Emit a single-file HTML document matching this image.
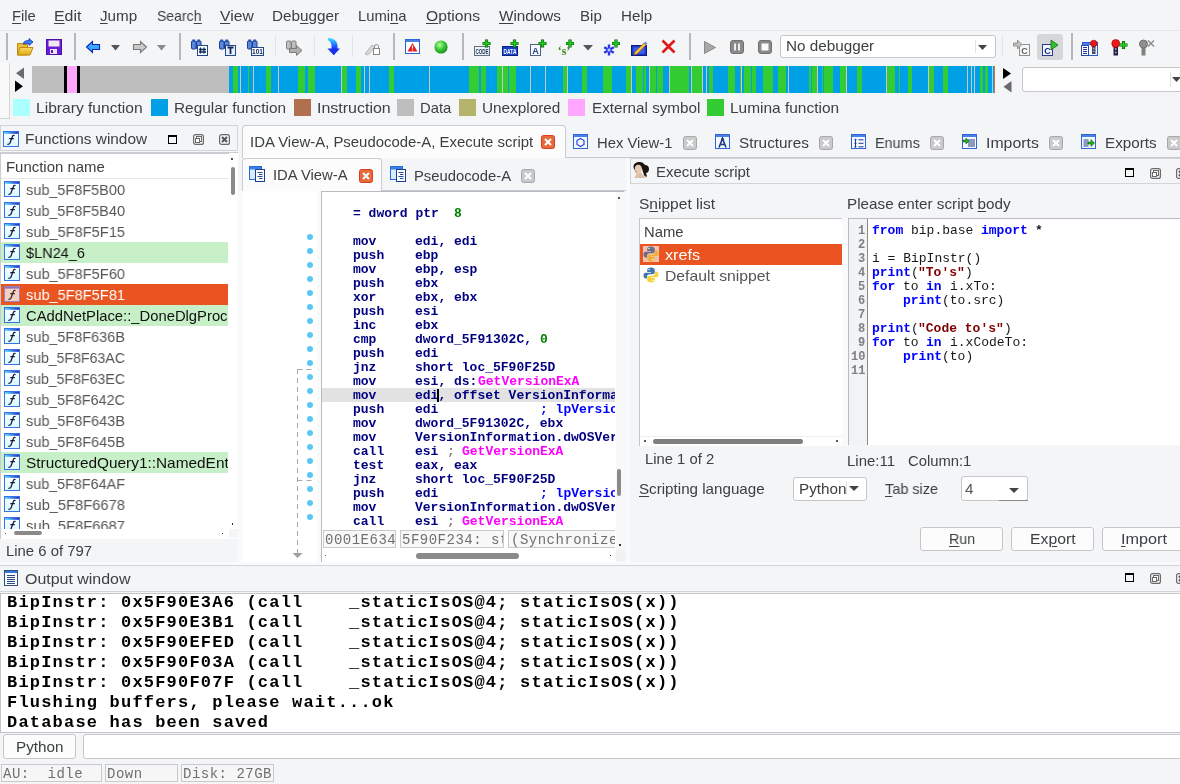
<!DOCTYPE html>
<html><head><meta charset="utf-8"><style>
html,body{margin:0;padding:0;}
body{width:1180px;height:784px;overflow:hidden;position:relative;background:#f4f5f7;font-family:'Liberation Sans', sans-serif;}
.a{position:absolute;}
svg.a{will-change:transform;overflow:visible;}
.t{white-space:pre;transform-origin:0 0;will-change:transform;}
u{text-decoration:underline;text-underline-offset:1.5px;text-decoration-thickness:1px;}

</style></head><body>
<div class="a t" style="left:12.4px;top:8.92px;font:14.8px/1 'Liberation Sans', sans-serif;color:#3c4043;transform:scaleX(0.9898);"><u>F</u>ile</div>
<div class="a t" style="left:54.2px;top:8.92px;font:14.8px/1 'Liberation Sans', sans-serif;color:#3c4043;transform:scaleX(1.0746);"><u>E</u>dit</div>
<div class="a t" style="left:100.3px;top:8.92px;font:14.8px/1 'Liberation Sans', sans-serif;color:#3c4043;transform:scaleX(1.0281);"><u>J</u>ump</div>
<div class="a t" style="left:156.5px;top:8.92px;font:14.8px/1 'Liberation Sans', sans-serif;color:#3c4043;transform:scaleX(0.9470);">Searc<u>h</u></div>
<div class="a t" style="left:219.9px;top:8.92px;font:14.8px/1 'Liberation Sans', sans-serif;color:#3c4043;transform:scaleX(1.0596);"><u>V</u>iew</div>
<div class="a t" style="left:272.2px;top:8.92px;font:14.8px/1 'Liberation Sans', sans-serif;color:#3c4043;transform:scaleX(1.0309);">Deb<u>u</u>gger</div>
<div class="a t" style="left:358.3px;top:8.92px;font:14.8px/1 'Liberation Sans', sans-serif;color:#3c4043;">Lumi<u>n</u>a</div>
<div class="a t" style="left:426px;top:8.92px;font:14.8px/1 'Liberation Sans', sans-serif;color:#3c4043;transform:scaleX(1.0589);"><u>O</u>ptions</div>
<div class="a t" style="left:499px;top:8.92px;font:14.8px/1 'Liberation Sans', sans-serif;color:#3c4043;transform:scaleX(1.0329);"><u>W</u>indows</div>
<div class="a t" style="left:580.4px;top:8.92px;font:14.8px/1 'Liberation Sans', sans-serif;color:#3c4043;transform:scaleX(1.0194);">Bip</div>
<div class="a t" style="left:621.4px;top:8.92px;font:14.8px/1 'Liberation Sans', sans-serif;color:#3c4043;transform:scaleX(1.0252);">Help</div>
<div class="a" style="left:0px;top:30px;width:1180px;height:1px;background:#e6e7e9;"></div>
<div class="a" style="left:5.5px;top:33px;width:2px;height:27px;background:#b8b8b8;"></div>
<div class="a" style="left:74px;top:33px;width:2px;height:27px;background:#b8b8b8;"></div>
<div class="a" style="left:179px;top:33px;width:2px;height:27px;background:#b8b8b8;"></div>
<div class="a" style="left:393px;top:33px;width:2px;height:27px;background:#b8b8b8;"></div>
<div class="a" style="left:462px;top:33px;width:2px;height:27px;background:#b8b8b8;"></div>
<div class="a" style="left:689px;top:33px;width:2px;height:27px;background:#b8b8b8;"></div>
<div class="a" style="left:1071px;top:33px;width:2px;height:27px;background:#b8b8b8;"></div>
<div class="a" style="left:275px;top:36px;width:1px;height:21px;background:#e2e3e5;"></div>
<div class="a" style="left:314px;top:36px;width:1px;height:21px;background:#e2e3e5;"></div>
<div class="a" style="left:352px;top:36px;width:1px;height:21px;background:#e2e3e5;"></div>
<div class="a" style="left:1002px;top:36px;width:1px;height:21px;background:#e2e3e5;"></div>
<!--toolbar icons-->
<svg class="a" style="left:17px;top:38px" width="17" height="18" viewBox="0 0 17 18"><defs><linearGradient id="fo" x1="0" y1="0" x2="0" y2="1"><stop offset="0" stop-color="#f6dc6a"/><stop offset="1" stop-color="#e0a810"/></linearGradient></defs><path d="M0.5 5.5h5l1 1h4v10.5h-10z" fill="#e8bd3a" stroke="#c08a10"/><path d="M3 9.5h13l-3 7.5h-12.5z" fill="url(#fo)" stroke="#c08a10"/><path d="M6 6c1-3 3-3.5 6-3.5v-2l4 3.5-4 3.5v-2c-2 0-4 0-6 0.5z" fill="#3a80f0" stroke="#1530c0" stroke-width="0.8"/></svg>
<svg class="a" style="left:46px;top:38.5px" width="16" height="16" viewBox="0 0 16 16"><rect x="0.5" y="0.5" width="15" height="15" fill="#6a1cd8" stroke="#4a10a8"/><rect x="2.5" y="1.5" width="11" height="6" fill="#f2e8ec"/><rect x="4" y="10" width="7" height="5" fill="#ece8f4"/><rect x="5" y="11" width="2" height="3" fill="#5a20c0"/></svg>
<svg class="a" style="left:86px;top:40.5px" width="14" height="12" viewBox="0 0 14 12"><path d="M0.5 6L6.5 0.5v3h7v5h-7v3z" fill="#3aa8ff" stroke="#0a28b8" stroke-width="1.1"/></svg>
<svg class="a" style="left:111px;top:44.5px" width="9" height="6" viewBox="0 0 9 6"><path d="M0 0h9l-4.5 5.5z" fill="#555"/></svg>
<svg class="a" style="left:133px;top:40.5px" width="14" height="12" viewBox="0 0 14 12"><path d="M13.5 6L7.5 0.5v3h-7v5h7v3z" fill="#c8c8c8" stroke="#7a7a7a" stroke-width="1.1"/></svg>
<svg class="a" style="left:157px;top:44.5px" width="9" height="6" viewBox="0 0 9 6"><path d="M0 0h9l-4.5 5.5z" fill="#8a8a8a"/></svg>
<svg class="a" style="left:191px;top:38.5px" width="17" height="17" viewBox="0 0 17 17"><rect x="0.5" y="2" width="4.5" height="8" rx="1" fill="#5a8ae0" stroke="#1e3f90"/><rect x="5.5" y="2" width="4.5" height="8" rx="1" fill="#5a8ae0" stroke="#1e3f90"/><rect x="1.2" y="0.5" width="3" height="2.5" fill="#2e55b0"/><rect x="6.2" y="0.5" width="3" height="2.5" fill="#2e55b0"/><rect x="6.5" y="6.5" width="10" height="10" fill="#fff" stroke="#1e4a8a"/><path d="M9.5 8.5v6M13 8.5v6M8 10.5h7M8 13h7" stroke="#0e2a60" stroke-width="1.3"/></svg>
<svg class="a" style="left:219px;top:38.5px" width="17" height="17" viewBox="0 0 17 17"><rect x="0.5" y="2" width="4.5" height="8" rx="1" fill="#5a8ae0" stroke="#1e3f90"/><rect x="5.5" y="2" width="4.5" height="8" rx="1" fill="#5a8ae0" stroke="#1e3f90"/><rect x="1.2" y="0.5" width="3" height="2.5" fill="#2e55b0"/><rect x="6.2" y="0.5" width="3" height="2.5" fill="#2e55b0"/><rect x="6.5" y="6.5" width="10" height="10" fill="#e8f0ff" stroke="#1e4a8a"/><path d="M8.5 8.5h6M11.5 8.5v6.5" stroke="#0e2a60" stroke-width="1.8"/></svg>
<svg class="a" style="left:247px;top:38.5px" width="17" height="17" viewBox="0 0 17 17"><rect x="0.5" y="2" width="4.5" height="8" rx="1" fill="#5a8ae0" stroke="#1e3f90"/><rect x="5.5" y="2" width="4.5" height="8" rx="1" fill="#5a8ae0" stroke="#1e3f90"/><rect x="1.2" y="0.5" width="3" height="2.5" fill="#2e55b0"/><rect x="6.2" y="0.5" width="3" height="2.5" fill="#2e55b0"/><rect x="4.5" y="8.5" width="12" height="8" fill="#fff" stroke="#1e4a8a"/><text x="10.5" y="15.2" font-size="6.5" font-weight="bold" text-anchor="middle" font-family="Liberation Sans" fill="#0e2a60">101</text></svg>
<svg class="a" style="left:286px;top:38.5px" width="17" height="17" viewBox="0 0 17 17"><rect x="0.5" y="2" width="4.5" height="8" rx="1" fill="#c0c0c0" stroke="#808080"/><rect x="5.5" y="2" width="4.5" height="8" rx="1" fill="#c0c0c0" stroke="#808080"/><path d="M3.5 9.5h7v-3l5.5 5-5.5 5v-3h-7z" fill="#b0b0b0" stroke="#7a7a7a"/></svg>
<svg class="a" style="left:327px;top:38px" width="13" height="18" viewBox="0 0 13 18"><defs><linearGradient id="da" x1="0" y1="0" x2="0" y2="1"><stop offset="0" stop-color="#40e0ff"/><stop offset="1" stop-color="#1030ff"/></linearGradient></defs><path d="M1 0c6 0 9.5 3 9.5 8v3h-6v-3c0-3-1.5-5-3.5-6z" fill="url(#da)"/><path d="M0.5 10.5h12.5l-6.25 6.8z" fill="#1a30f0"/></svg>
<svg class="a" style="left:364px;top:38.5px" width="16" height="17" viewBox="0 0 16 17"><path d="M1 15l7-9 3 2-7 8z" fill="#d8d8d8" stroke="#aaa" stroke-width="0.8"/><rect x="9.5" y="9.5" width="6" height="6" fill="#fff" stroke="#888"/><path d="M10.5 9.5v-2a2 2 0 0 1 4 0v2" fill="none" stroke="#888"/></svg>
<svg class="a" style="left:405px;top:39px" width="15" height="15" viewBox="0 0 15 15"><rect x="0.5" y="0.5" width="14" height="14" fill="#fff" stroke="#2e64d8"/><rect x="1" y="1" width="13" height="2" fill="#4a80e8"/><path d="M7.5 4l5 8.5h-10z" fill="#e02020"/><path d="M7.5 6.5v3M7.5 10.5v1" stroke="#fff" stroke-width="1.2"/></svg>
<svg class="a" style="left:434px;top:40px" width="14" height="14" viewBox="0 0 14 14"><defs><radialGradient id="gc" cx="0.4" cy="0.35" r="0.7"><stop offset="0" stop-color="#b8ff9a"/><stop offset="0.5" stop-color="#3cc83c"/><stop offset="1" stop-color="#168a16"/></radialGradient></defs><circle cx="7" cy="7" r="6.6" fill="url(#gc)"/></svg>
<svg class="a" style="left:474px;top:38.5px" width="17" height="17" viewBox="0 0 17 17"><rect x="0.5" y="7.5" width="15" height="9" fill="#f0f4f8" stroke="#607080"/><text x="1.5" y="15" font-size="6.5" font-weight="bold" textLength="13" lengthAdjust="spacingAndGlyphs" font-family="Liberation Sans" fill="#103050">CODE</text><path d="M12.5 0.5v8M8.5 4.5h8" stroke="#0a5a0a" stroke-width="3.2"/><path d="M12.5 0.8999999999999999v7.2M8.9 4.5h7.2" stroke="#22c822" stroke-width="1.8"/></svg>
<svg class="a" style="left:502px;top:38.5px" width="17" height="17" viewBox="0 0 17 17"><rect x="0.5" y="7.5" width="15" height="9" fill="#1840c8" stroke="#0a2080"/><text x="1.5" y="15" font-size="6.5" font-weight="bold" textLength="13" lengthAdjust="spacingAndGlyphs" font-family="Liberation Sans" fill="#fff">DATA</text><path d="M12.5 0.5v8M8.5 4.5h8" stroke="#0a5a0a" stroke-width="3.2"/><path d="M12.5 0.8999999999999999v7.2M8.9 4.5h7.2" stroke="#22c822" stroke-width="1.8"/></svg>
<svg class="a" style="left:530px;top:38.5px" width="17" height="17" viewBox="0 0 17 17"><rect x="0.5" y="5.5" width="10" height="11" fill="#f4f8ff" stroke="#506080"/><text x="5.5" y="14.5" font-size="9" font-weight="bold" text-anchor="middle" font-family="Liberation Sans" fill="#1e4080">A</text><path d="M12.5 0.5v8M8.5 4.5h8" stroke="#0a5a0a" stroke-width="3.2"/><path d="M12.5 0.8999999999999999v7.2M8.9 4.5h7.2" stroke="#22c822" stroke-width="1.8"/></svg>
<svg class="a" style="left:557px;top:38.5px" width="18" height="17" viewBox="0 0 18 17"><text x="7" y="16" font-size="12" font-weight="bold" text-anchor="middle" font-family="Liberation Serif" fill="#3a8a1a">‘s’</text><path d="M13 0.5v8M9 4.5h8" stroke="#0a5a0a" stroke-width="3.2"/><path d="M13 0.8999999999999999v7.2M9.4 4.5h7.2" stroke="#22c822" stroke-width="1.8"/></svg>
<svg class="a" style="left:583px;top:45px" width="10" height="5.5" viewBox="0 0 10 5.5"><path d="M0 0h10l-5 5.5z" fill="#555"/></svg>
<svg class="a" style="left:603px;top:38.5px" width="18" height="17" viewBox="0 0 18 17"><path d="M6 5.5v11M1.2 8.2l9.6 5.6M1.2 13.8l9.6-5.6" stroke="#2a36e8" stroke-width="2.4"/><circle cx="6" cy="11" r="2" fill="#b8c8ff" stroke="#2a36e8" stroke-width="0.8"/><path d="M13 0.5v8M9 4.5h8" stroke="#0a5a0a" stroke-width="3.2"/><path d="M13 0.8999999999999999v7.2M9.4 4.5h7.2" stroke="#22c822" stroke-width="1.8"/></svg>
<svg class="a" style="left:631px;top:38.5px" width="18" height="17" viewBox="0 0 18 17"><rect x="0.5" y="6.5" width="15" height="10" fill="#1a3ad0" stroke="#0a1a80"/><rect x="2.5" y="8.5" width="11" height="6" fill="#4060e8"/><path d="M4 13l9-9 2 2-9 9-3 1z" fill="#f8c040" stroke="#a06010" stroke-width="0.8"/><path d="M13 4l1.5-1.5 2 2-1.5 1.5z" fill="#6090f0"/></svg>
<svg class="a" style="left:661px;top:39px" width="15" height="15" viewBox="0 0 15 15"><path d="M1.5 1.5l12 12M13.5 1.5l-12 12" stroke="#e01818" stroke-width="2.6"/></svg>
<svg class="a" style="left:704px;top:41px" width="12" height="13" viewBox="0 0 12 13"><path d="M0.5 0.5l11 6-11 6z" fill="#a8a8a8" stroke="#888"/></svg>
<svg class="a" style="left:730px;top:40px" width="14" height="14" viewBox="0 0 14 14"><rect x="0.5" y="0.5" width="13" height="13" rx="2.5" fill="#8a8a8a" stroke="#707070"/><rect x="4" y="3.5" width="2" height="7" fill="#eee"/><rect x="8" y="3.5" width="2" height="7" fill="#eee"/></svg>
<svg class="a" style="left:758px;top:40px" width="14" height="14" viewBox="0 0 14 14"><rect x="0.5" y="0.5" width="13" height="13" rx="2.5" fill="#8a8a8a" stroke="#707070"/><rect x="3.5" y="3.5" width="7" height="7" fill="#fafafa"/></svg>
<div class="a" style="left:780px;top:35px;width:216px;height:23px;background:#fff;box-sizing:border-box;border:1px solid #c4c6c9;border-radius:3px;"></div>
<div class="a" style="left:974.5px;top:40px;width:1px;height:13px;background:#e2e2e2;"></div>
<div class="a t" style="left:785.7px;top:38.72px;font:14.8px/1 'Liberation Sans', sans-serif;color:#3c4043;transform:scaleX(1.0309);">No debugger</div>
<svg class="a" style="left:978px;top:45px" width="9" height="5" viewBox="0 0 9 5"><path d="M0 0h9l-4.5 5z" fill="#444"/></svg>
<svg class="a" style="left:1013px;top:38.5px" width="18" height="17" viewBox="0 0 18 17"><rect x="6.5" y="5.5" width="10" height="11" fill="#f8f8f8" stroke="#909090"/><text x="11.5" y="14.5" font-size="9" font-weight="bold" text-anchor="middle" font-family="Liberation Sans" fill="#606060">C</text><path d="M0.5 4h4v-3l4.5 4.5-4.5 4.5v-3h-4z" fill="#c0c0c0" stroke="#808080" stroke-width="0.8"/></svg>
<div class="a" style="left:1037px;top:34px;width:26px;height:25.5px;background:#d6d7d9;border-radius:3px;"></div>
<svg class="a" style="left:1042px;top:38.5px" width="17" height="17" viewBox="0 0 17 17"><rect x="0.5" y="5.5" width="10" height="11" fill="#f0f4ff" stroke="#2a3a90"/><text x="5.5" y="14.5" font-size="9" font-weight="bold" text-anchor="middle" font-family="Liberation Sans" fill="#1a2a80">C</text><path d="M9 1v10l7-5z" fill="#30c030" stroke="#107010" stroke-width="0.8"/></svg>
<svg class="a" style="left:1082px;top:38.5px" width="18" height="17" viewBox="0 0 18 17"><rect x="0.5" y="3.5" width="15" height="13" fill="#f4f8ff" stroke="#2a5ad0"/><rect x="1" y="4" width="14" height="2" fill="#4a80e8"/><rect x="-0.5" y="6.5" width="7" height="10" fill="#fff" stroke="#2a4aa0"/><path d="M1 8.5h4M1 10.5h4M1 12.5h4M1 14.5h4" stroke="#1a3a90"/><rect x="10" y="7" width="3.5" height="8" fill="#404060"/><circle cx="11.75" cy="9.5" r="0.9" fill="#aaa"/><circle cx="11.75" cy="12.5" r="0.9" fill="#aaa"/><circle cx="11.75" cy="4.5" r="3.3" fill="#e81818" stroke="#900" stroke-width="0.6"/></svg>
<svg class="a" style="left:1111px;top:38.5px" width="17" height="17" viewBox="0 0 17 17"><rect x="2.5" y="6" width="4.5" height="10.5" fill="#20204a"/><circle cx="4.75" cy="10" r="0.9" fill="#aaa"/><circle cx="4.75" cy="13.5" r="0.9" fill="#aaa"/><circle cx="4.75" cy="4.5" r="4" fill="#f01818" stroke="#900" stroke-width="0.6"/><path d="M12.5 2v8M8.5 6h8" stroke="#0a5a0a" stroke-width="3.2"/><path d="M12.5 2.4v7.2M8.9 6h7.2" stroke="#22c822" stroke-width="1.8"/></svg>
<svg class="a" style="left:1139px;top:38.5px" width="17" height="17" viewBox="0 0 17 17"><rect x="2.5" y="7" width="4" height="9.5" fill="#808080"/><circle cx="4.5" cy="5" r="4" fill="#909090" stroke="#707070"/><path d="M9 1.5l6 6M15 1.5l-6 6" stroke="#888" stroke-width="1.3"/></svg>
<div class="a" style="left:0px;top:63px;width:9.5px;height:56px;background:#f9f9fa;border-right:1px solid #d4d6d9;border-bottom:1px solid #d4d6d9;box-sizing:border-box;"></div>
<svg class="a" style="left:15px;top:67px" width="10" height="26" viewBox="0 0 10 26"><path d="M9 0.5v11.5l-8-5.75z" fill="#6a6a6a"/><path d="M0 13.5v11.5l8-5.75z" fill="#000"/></svg>
<svg class="a" style="left:1003px;top:67px" width="10" height="26" viewBox="0 0 10 26"><path d="M0 1v11l8-5.5z" fill="#000"/><path d="M8.5 14v11.5l-8-5.75z" fill="#6a6a6a"/></svg>
<svg class="a" style="left:32px;top:66px" width="963" height="27" viewBox="0 0 963 27"><rect x="0" y="0" width="197" height="27" fill="#bebebe"/><rect x="32" y="0" width="3" height="27" fill="#000"/><rect x="35" y="0" width="10" height="27" fill="#ffa6ff"/><rect x="45" y="0" width="3" height="27" fill="#000"/><rect x="197" y="0" width="766" height="27" fill="#00a0e6"/><rect x="201.0" y="0" width="5.0" height="27" fill="#33cc33"/><rect x="208.0" y="0" width="1.0" height="27" fill="#c8c8c8"/><rect x="216.0" y="0" width="1.0" height="27" fill="#33cc33"/><rect x="221.0" y="0" width="1.0" height="27" fill="#c8c8c8"/><rect x="234.0" y="0" width="5.0" height="27" fill="#33cc33"/><rect x="246.0" y="0" width="1.0" height="27" fill="#c8c8c8"/><rect x="266.0" y="0" width="7.0" height="27" fill="#33cc33"/><rect x="276.0" y="0" width="7.0" height="27" fill="#33cc33"/><rect x="309.0" y="0" width="1.0" height="27" fill="#c8c8c8"/><rect x="310.0" y="0" width="5.0" height="27" fill="#33cc33"/><rect x="324.0" y="0" width="5.0" height="27" fill="#33cc33"/><rect x="332.0" y="0" width="1.0" height="27" fill="#c8c8c8"/><rect x="337.0" y="0" width="1.0" height="27" fill="#c8c8c8"/><rect x="357.0" y="0" width="5.0" height="27" fill="#33cc33"/><rect x="397.0" y="0" width="1.0" height="27" fill="#c8c8c8"/><rect x="437.0" y="0" width="10.0" height="27" fill="#33cc33"/><rect x="449.0" y="0" width="5.0" height="27" fill="#33cc33"/><rect x="465.0" y="0" width="5.0" height="27" fill="#33cc33"/><rect x="470.0" y="0" width="1.0" height="27" fill="#c8c8c8"/><rect x="471.0" y="0" width="5.0" height="27" fill="#33cc33"/><rect x="477.0" y="0" width="7.0" height="27" fill="#33cc33"/><rect x="498.0" y="0" width="1.0" height="27" fill="#c8c8c8"/><rect x="513.0" y="0" width="1.0" height="27" fill="#c8c8c8"/><rect x="531.0" y="0" width="4.0" height="27" fill="#33cc33"/><rect x="535.0" y="0" width="1.0" height="27" fill="#c8c8c8"/><rect x="550.0" y="0" width="5.0" height="27" fill="#33cc33"/><rect x="571.0" y="0" width="9.0" height="27" fill="#33cc33"/><rect x="594.0" y="0" width="5.0" height="27" fill="#33cc33"/><rect x="599.0" y="0" width="1.0" height="27" fill="#c8c8c8"/><rect x="604.0" y="0" width="7.0" height="27" fill="#33cc33"/><rect x="612.0" y="0" width="2.0" height="27" fill="#33cc33"/><rect x="617.0" y="0" width="1.0" height="27" fill="#c8c8c8"/><rect x="618.0" y="0" width="6.0" height="27" fill="#33cc33"/><rect x="625.0" y="0" width="6.0" height="27" fill="#33cc33"/><rect x="637.0" y="0" width="1.0" height="27" fill="#c8c8c8"/><rect x="638.0" y="0" width="19.0" height="27" fill="#33cc33"/><rect x="659.0" y="0" width="1.0" height="27" fill="#c8c8c8"/><rect x="660.0" y="0" width="10.0" height="27" fill="#33cc33"/><rect x="670.0" y="0" width="1.0" height="27" fill="#c8c8c8"/><rect x="674.0" y="0" width="1.0" height="27" fill="#c8c8c8"/><rect x="677.0" y="0" width="4.0" height="27" fill="#33cc33"/><rect x="696.0" y="0" width="7.0" height="27" fill="#33cc33"/><rect x="708.0" y="0" width="1.0" height="27" fill="#33cc33"/><rect x="709.0" y="0" width="1.0" height="27" fill="#c8c8c8"/><rect x="712.0" y="0" width="7.0" height="27" fill="#33cc33"/><rect x="720.0" y="0" width="4.0" height="27" fill="#33cc33"/><rect x="731.0" y="0" width="10.0" height="27" fill="#33cc33"/><rect x="746.0" y="0" width="8.0" height="27" fill="#33cc33"/><rect x="756.0" y="0" width="1.0" height="27" fill="#c8c8c8"/><rect x="777.0" y="0" width="2.0" height="27" fill="#33cc33"/><rect x="780.0" y="0" width="5.0" height="27" fill="#33cc33"/><rect x="785.0" y="0" width="1.0" height="27" fill="#c8c8c8"/><rect x="790.0" y="0" width="1.0" height="27" fill="#33cc33"/><rect x="792.0" y="0" width="9.0" height="27" fill="#33cc33"/><rect x="808.0" y="0" width="6.0" height="27" fill="#33cc33"/><rect x="814.0" y="0" width="1.0" height="27" fill="#c8c8c8"/><rect x="825.0" y="0" width="5.0" height="27" fill="#33cc33"/><rect x="854.0" y="0" width="1.0" height="27" fill="#c8c8c8"/><rect x="855.0" y="0" width="8.0" height="27" fill="#33cc33"/><rect x="867.0" y="0" width="1.0" height="27" fill="#33cc33"/><rect x="876.0" y="0" width="4.0" height="27" fill="#33cc33"/><rect x="896.0" y="0" width="1.0" height="27" fill="#c8c8c8"/><rect x="897.0" y="0" width="5.0" height="27" fill="#33cc33"/><rect x="911.0" y="0" width="5.0" height="27" fill="#33cc33"/><rect x="935.0" y="0" width="1.0" height="27" fill="#c8c8c8"/><rect x="939.0" y="0" width="1.0" height="27" fill="#c8c8c8"/><rect x="942.0" y="0" width="1.0" height="27" fill="#c8c8c8"/><rect x="948.0" y="0" width="3.0" height="27" fill="#33cc33"/><rect x="953.0" y="0" width="3.0" height="27" fill="#33cc33"/><rect x="960.0" y="0" width="1.0" height="27" fill="#c8c8c8"/><rect x="962.0" y="0" width="1.0" height="27" fill="#c87850"/></svg>
<div class="a" style="left:1021.5px;top:67px;width:170px;height:25px;background:#fff;box-sizing:border-box;border:1px solid #c4c6c9;border-radius:3px;"></div>
<div class="a" style="left:1169.5px;top:72px;width:1px;height:15px;background:#e2e2e2;"></div>
<svg class="a" style="left:1172px;top:77px" width="9" height="5" viewBox="0 0 9 5"><path d="M0 0h9l-4.5 5z" fill="#444"/></svg>
<div class="a" style="left:13px;top:99px;width:17px;height:17px;background:#aaffff;"></div>
<div class="a t" style="left:36.3px;top:100.92px;font:14.8px/1 'Liberation Sans', sans-serif;color:#3c4043;transform:scaleX(1.0547);">Library function</div>
<div class="a" style="left:151px;top:99px;width:17px;height:17px;background:#00a0e6;"></div>
<div class="a t" style="left:174.4px;top:100.92px;font:14.8px/1 'Liberation Sans', sans-serif;color:#3c4043;transform:scaleX(1.0403);">Regular function</div>
<div class="a" style="left:294px;top:99px;width:17px;height:17px;background:#b07050;"></div>
<div class="a t" style="left:316.7px;top:100.92px;font:14.8px/1 'Liberation Sans', sans-serif;color:#3c4043;transform:scaleX(1.0797);">Instruction</div>
<div class="a" style="left:397px;top:99px;width:17px;height:17px;background:#bebebe;"></div>
<div class="a t" style="left:420.4px;top:100.92px;font:14.8px/1 'Liberation Sans', sans-serif;color:#3c4043;transform:scaleX(0.9854);">Data</div>
<div class="a" style="left:459px;top:99px;width:17px;height:17px;background:#b4b46c;"></div>
<div class="a t" style="left:482.4px;top:100.92px;font:14.8px/1 'Liberation Sans', sans-serif;color:#3c4043;transform:scaleX(1.0360);">Unexplored</div>
<div class="a" style="left:568px;top:99px;width:17px;height:17px;background:#ffa6ff;"></div>
<div class="a t" style="left:591.6px;top:100.92px;font:14.8px/1 'Liberation Sans', sans-serif;color:#3c4043;transform:scaleX(1.0298);">External symbol</div>
<div class="a" style="left:707px;top:99px;width:17px;height:17px;background:#33cc33;"></div>
<div class="a t" style="left:730.4px;top:100.92px;font:14.8px/1 'Liberation Sans', sans-serif;color:#3c4043;transform:scaleX(1.0443);">Lumina function</div>
<div class="a" style="left:0px;top:125px;width:238px;height:26px;background:#f4f5f7;box-sizing:border-box;border:1px solid #d2d4d7;"></div>
<svg class="a" style="left:3px;top:130.5px" width="16" height="16" viewBox="0 0 16 16"><defs><linearGradient id="fb" x1="0" y1="0" x2="1" y2="0"><stop offset="0" stop-color="#5ad8ff"/><stop offset="1" stop-color="#1a30c8"/></linearGradient><linearGradient id="fi" x1="0" y1="0" x2="0" y2="1"><stop offset="0" stop-color="#ffffff"/><stop offset="1" stop-color="#d6f8ff"/></linearGradient></defs><rect x="0.5" y="0.5" width="15" height="15" fill="url(#fi)" stroke="#3a72e6"/><rect x="1" y="1" width="14" height="1.8" fill="url(#fb)"/><path d="M11.5 4.6c-.8-.4-1.6-.2-2 .6L6.9 12.2c-.4.8-1.2 1.2-2.5 1.1M6.3 7.6h4.5" fill="none" stroke="#10183a" stroke-width="1.25"/></svg>
<div class="a t" style="left:25.2px;top:132.42px;font:14.8px/1 'Liberation Sans', sans-serif;color:#3c4043;transform:scaleX(1.0373);">Functions window</div>
<svg class="a" style="left:168px;top:135px" width="10" height="10" viewBox="0 0 10 10"><rect x="0.5" y="0.5" width="8" height="8" fill="none" stroke="#000" stroke-width="1"/><rect x="0" y="0" width="9" height="2" fill="#000"/></svg>
<svg class="a" style="left:193px;top:134px" width="11" height="11" viewBox="0 0 11 11"><rect x="0.6" y="0.6" width="9.8" height="9.8" rx="2" fill="none" stroke="#6a6a6a" stroke-width="1.2"/><rect x="3.5" y="2.5" width="5" height="5" fill="none" stroke="#6a6a6a"/><rect x="2.5" y="4.5" width="4" height="4" fill="#fff" stroke="#6a6a6a"/></svg>
<svg class="a" style="left:219px;top:134px" width="11" height="11" viewBox="0 0 11 11"><rect x="0.6" y="0.6" width="9.8" height="9.8" rx="2" fill="none" stroke="#6a6a6a" stroke-width="1.2"/><path d="M3 3l5 5M8 3l-5 5" stroke="#555" stroke-width="2"/></svg>
<div class="a" style="left:0px;top:152px;width:238px;height:387px;background:#fff;border-top:2px solid #c9ccd0;border-left:1px solid #c9ccd0;box-sizing:border-box;"></div>
<div class="a t" style="left:5.7px;top:159.92px;font:14.8px/1 'Liberation Sans', sans-serif;color:#3c4043;transform:scaleX(1.0084);">Function name</div>
<div class="a" style="left:1px;top:178px;width:228px;height:1px;background:#e6e7e9;"></div>
<div class="a" style="left:1px;top:179px;width:227px;height:350px;overflow:hidden">
<svg class="a" style="left:3px;top:2px" width="16" height="16" viewBox="0 0 16 16"><defs><linearGradient id="fb" x1="0" y1="0" x2="1" y2="0"><stop offset="0" stop-color="#5ad8ff"/><stop offset="1" stop-color="#1a30c8"/></linearGradient><linearGradient id="fi" x1="0" y1="0" x2="0" y2="1"><stop offset="0" stop-color="#ffffff"/><stop offset="1" stop-color="#d6f8ff"/></linearGradient></defs><rect x="0.5" y="0.5" width="15" height="15" fill="url(#fi)" stroke="#3a72e6"/><rect x="1" y="1" width="14" height="1.8" fill="url(#fb)"/><path d="M11.5 4.6c-.8-.4-1.6-.2-2 .6L6.9 12.2c-.4.8-1.2 1.2-2.5 1.1M6.3 7.6h4.5" fill="none" stroke="#10183a" stroke-width="1.25"/></svg>
<div class="a t" style="left:25.3px;top:3.92px;font:14.8px/1 'Liberation Sans', sans-serif;color:#555;transform:scaleX(0.9785);">sub_5F8F5B00</div>
<svg class="a" style="left:3px;top:23px" width="16" height="16" viewBox="0 0 16 16"><defs><linearGradient id="fb" x1="0" y1="0" x2="1" y2="0"><stop offset="0" stop-color="#5ad8ff"/><stop offset="1" stop-color="#1a30c8"/></linearGradient><linearGradient id="fi" x1="0" y1="0" x2="0" y2="1"><stop offset="0" stop-color="#ffffff"/><stop offset="1" stop-color="#d6f8ff"/></linearGradient></defs><rect x="0.5" y="0.5" width="15" height="15" fill="url(#fi)" stroke="#3a72e6"/><rect x="1" y="1" width="14" height="1.8" fill="url(#fb)"/><path d="M11.5 4.6c-.8-.4-1.6-.2-2 .6L6.9 12.2c-.4.8-1.2 1.2-2.5 1.1M6.3 7.6h4.5" fill="none" stroke="#10183a" stroke-width="1.25"/></svg>
<div class="a t" style="left:25.3px;top:24.92px;font:14.8px/1 'Liberation Sans', sans-serif;color:#555;transform:scaleX(0.9785);">sub_5F8F5B40</div>
<svg class="a" style="left:3px;top:44px" width="16" height="16" viewBox="0 0 16 16"><defs><linearGradient id="fb" x1="0" y1="0" x2="1" y2="0"><stop offset="0" stop-color="#5ad8ff"/><stop offset="1" stop-color="#1a30c8"/></linearGradient><linearGradient id="fi" x1="0" y1="0" x2="0" y2="1"><stop offset="0" stop-color="#ffffff"/><stop offset="1" stop-color="#d6f8ff"/></linearGradient></defs><rect x="0.5" y="0.5" width="15" height="15" fill="url(#fi)" stroke="#3a72e6"/><rect x="1" y="1" width="14" height="1.8" fill="url(#fb)"/><path d="M11.5 4.6c-.8-.4-1.6-.2-2 .6L6.9 12.2c-.4.8-1.2 1.2-2.5 1.1M6.3 7.6h4.5" fill="none" stroke="#10183a" stroke-width="1.25"/></svg>
<div class="a t" style="left:25.3px;top:45.92px;font:14.8px/1 'Liberation Sans', sans-serif;color:#555;transform:scaleX(0.9866);">sub_5F8F5F15</div>
<div class="a" style="left:0px;top:63px;width:226.5px;height:21px;background:#c8f0c8;"></div>
<svg class="a" style="left:3px;top:65px" width="16" height="16" viewBox="0 0 16 16"><defs><linearGradient id="fb" x1="0" y1="0" x2="1" y2="0"><stop offset="0" stop-color="#5ad8ff"/><stop offset="1" stop-color="#1a30c8"/></linearGradient><linearGradient id="fi" x1="0" y1="0" x2="0" y2="1"><stop offset="0" stop-color="#ffffff"/><stop offset="1" stop-color="#d6f8ff"/></linearGradient></defs><rect x="0.5" y="0.5" width="15" height="15" fill="url(#fi)" stroke="#3a72e6"/><rect x="1" y="1" width="14" height="1.8" fill="url(#fb)"/><path d="M11.5 4.6c-.8-.4-1.6-.2-2 .6L6.9 12.2c-.4.8-1.2 1.2-2.5 1.1M6.3 7.6h4.5" fill="none" stroke="#10183a" stroke-width="1.25"/></svg>
<div class="a t" style="left:25.3px;top:66.92px;font:14.8px/1 'Liberation Sans', sans-serif;color:#111;transform:scaleX(0.9823);">$LN24_6</div>
<svg class="a" style="left:3px;top:86px" width="16" height="16" viewBox="0 0 16 16"><defs><linearGradient id="fb" x1="0" y1="0" x2="1" y2="0"><stop offset="0" stop-color="#5ad8ff"/><stop offset="1" stop-color="#1a30c8"/></linearGradient><linearGradient id="fi" x1="0" y1="0" x2="0" y2="1"><stop offset="0" stop-color="#ffffff"/><stop offset="1" stop-color="#d6f8ff"/></linearGradient></defs><rect x="0.5" y="0.5" width="15" height="15" fill="url(#fi)" stroke="#3a72e6"/><rect x="1" y="1" width="14" height="1.8" fill="url(#fb)"/><path d="M11.5 4.6c-.8-.4-1.6-.2-2 .6L6.9 12.2c-.4.8-1.2 1.2-2.5 1.1M6.3 7.6h4.5" fill="none" stroke="#10183a" stroke-width="1.25"/></svg>
<div class="a t" style="left:25.3px;top:87.92px;font:14.8px/1 'Liberation Sans', sans-serif;color:#555;transform:scaleX(0.9866);">sub_5F8F5F60</div>
<div class="a" style="left:0px;top:105px;width:226.5px;height:21px;background:#e95420;"></div>
<svg class="a" style="left:3px;top:107px" width="16" height="16" viewBox="0 0 16 16"><rect x="0.5" y="0.5" width="15" height="15" fill="#f2d0c4" stroke="#9a80b8"/><rect x="1" y="1" width="14" height="1.6" fill="#8a70c0"/><path d="M11.5 4.6c-.8-.4-1.6-.2-2 .6L6.9 12.2c-.4.8-1.2 1.2-2.5 1.1M6.3 7.6h4.5" fill="none" stroke="#3a2020" stroke-width="1.25"/></svg>
<div class="a t" style="left:25.3px;top:108.92px;font:14.8px/1 'Liberation Sans', sans-serif;color:#fff;transform:scaleX(0.9866);">sub_5F8F5F81</div>
<div class="a" style="left:0px;top:126px;width:226.5px;height:21px;background:#c8f0c8;"></div>
<svg class="a" style="left:3px;top:128px" width="16" height="16" viewBox="0 0 16 16"><defs><linearGradient id="fb" x1="0" y1="0" x2="1" y2="0"><stop offset="0" stop-color="#5ad8ff"/><stop offset="1" stop-color="#1a30c8"/></linearGradient><linearGradient id="fi" x1="0" y1="0" x2="0" y2="1"><stop offset="0" stop-color="#ffffff"/><stop offset="1" stop-color="#d6f8ff"/></linearGradient></defs><rect x="0.5" y="0.5" width="15" height="15" fill="url(#fi)" stroke="#3a72e6"/><rect x="1" y="1" width="14" height="1.8" fill="url(#fb)"/><path d="M11.5 4.6c-.8-.4-1.6-.2-2 .6L6.9 12.2c-.4.8-1.2 1.2-2.5 1.1M6.3 7.6h4.5" fill="none" stroke="#10183a" stroke-width="1.25"/></svg>
<div class="a t" style="left:25.3px;top:129.92px;font:14.8px/1 'Liberation Sans', sans-serif;color:#111;transform:scaleX(1.0);">CAddNetPlace::_DoneDlgProc</div>
<svg class="a" style="left:3px;top:149px" width="16" height="16" viewBox="0 0 16 16"><defs><linearGradient id="fb" x1="0" y1="0" x2="1" y2="0"><stop offset="0" stop-color="#5ad8ff"/><stop offset="1" stop-color="#1a30c8"/></linearGradient><linearGradient id="fi" x1="0" y1="0" x2="0" y2="1"><stop offset="0" stop-color="#ffffff"/><stop offset="1" stop-color="#d6f8ff"/></linearGradient></defs><rect x="0.5" y="0.5" width="15" height="15" fill="url(#fi)" stroke="#3a72e6"/><rect x="1" y="1" width="14" height="1.8" fill="url(#fb)"/><path d="M11.5 4.6c-.8-.4-1.6-.2-2 .6L6.9 12.2c-.4.8-1.2 1.2-2.5 1.1M6.3 7.6h4.5" fill="none" stroke="#10183a" stroke-width="1.25"/></svg>
<div class="a t" style="left:25.3px;top:150.92px;font:14.8px/1 'Liberation Sans', sans-serif;color:#555;transform:scaleX(0.9785);">sub_5F8F636B</div>
<svg class="a" style="left:3px;top:170px" width="16" height="16" viewBox="0 0 16 16"><defs><linearGradient id="fb" x1="0" y1="0" x2="1" y2="0"><stop offset="0" stop-color="#5ad8ff"/><stop offset="1" stop-color="#1a30c8"/></linearGradient><linearGradient id="fi" x1="0" y1="0" x2="0" y2="1"><stop offset="0" stop-color="#ffffff"/><stop offset="1" stop-color="#d6f8ff"/></linearGradient></defs><rect x="0.5" y="0.5" width="15" height="15" fill="url(#fi)" stroke="#3a72e6"/><rect x="1" y="1" width="14" height="1.8" fill="url(#fb)"/><path d="M11.5 4.6c-.8-.4-1.6-.2-2 .6L6.9 12.2c-.4.8-1.2 1.2-2.5 1.1M6.3 7.6h4.5" fill="none" stroke="#10183a" stroke-width="1.25"/></svg>
<div class="a t" style="left:25.3px;top:171.92px;font:14.8px/1 'Liberation Sans', sans-serif;color:#555;transform:scaleX(0.9553);">sub_5F8F63AC</div>
<svg class="a" style="left:3px;top:191px" width="16" height="16" viewBox="0 0 16 16"><defs><linearGradient id="fb" x1="0" y1="0" x2="1" y2="0"><stop offset="0" stop-color="#5ad8ff"/><stop offset="1" stop-color="#1a30c8"/></linearGradient><linearGradient id="fi" x1="0" y1="0" x2="0" y2="1"><stop offset="0" stop-color="#ffffff"/><stop offset="1" stop-color="#d6f8ff"/></linearGradient></defs><rect x="0.5" y="0.5" width="15" height="15" fill="url(#fi)" stroke="#3a72e6"/><rect x="1" y="1" width="14" height="1.8" fill="url(#fb)"/><path d="M11.5 4.6c-.8-.4-1.6-.2-2 .6L6.9 12.2c-.4.8-1.2 1.2-2.5 1.1M6.3 7.6h4.5" fill="none" stroke="#10183a" stroke-width="1.25"/></svg>
<div class="a t" style="left:25.3px;top:192.92px;font:14.8px/1 'Liberation Sans', sans-serif;color:#555;transform:scaleX(0.9553);">sub_5F8F63EC</div>
<svg class="a" style="left:3px;top:212px" width="16" height="16" viewBox="0 0 16 16"><defs><linearGradient id="fb" x1="0" y1="0" x2="1" y2="0"><stop offset="0" stop-color="#5ad8ff"/><stop offset="1" stop-color="#1a30c8"/></linearGradient><linearGradient id="fi" x1="0" y1="0" x2="0" y2="1"><stop offset="0" stop-color="#ffffff"/><stop offset="1" stop-color="#d6f8ff"/></linearGradient></defs><rect x="0.5" y="0.5" width="15" height="15" fill="url(#fi)" stroke="#3a72e6"/><rect x="1" y="1" width="14" height="1.8" fill="url(#fb)"/><path d="M11.5 4.6c-.8-.4-1.6-.2-2 .6L6.9 12.2c-.4.8-1.2 1.2-2.5 1.1M6.3 7.6h4.5" fill="none" stroke="#10183a" stroke-width="1.25"/></svg>
<div class="a t" style="left:25.3px;top:213.92px;font:14.8px/1 'Liberation Sans', sans-serif;color:#555;transform:scaleX(0.9706);">sub_5F8F642C</div>
<svg class="a" style="left:3px;top:233px" width="16" height="16" viewBox="0 0 16 16"><defs><linearGradient id="fb" x1="0" y1="0" x2="1" y2="0"><stop offset="0" stop-color="#5ad8ff"/><stop offset="1" stop-color="#1a30c8"/></linearGradient><linearGradient id="fi" x1="0" y1="0" x2="0" y2="1"><stop offset="0" stop-color="#ffffff"/><stop offset="1" stop-color="#d6f8ff"/></linearGradient></defs><rect x="0.5" y="0.5" width="15" height="15" fill="url(#fi)" stroke="#3a72e6"/><rect x="1" y="1" width="14" height="1.8" fill="url(#fb)"/><path d="M11.5 4.6c-.8-.4-1.6-.2-2 .6L6.9 12.2c-.4.8-1.2 1.2-2.5 1.1M6.3 7.6h4.5" fill="none" stroke="#10183a" stroke-width="1.25"/></svg>
<div class="a t" style="left:25.3px;top:234.92px;font:14.8px/1 'Liberation Sans', sans-serif;color:#555;transform:scaleX(0.9785);">sub_5F8F643B</div>
<svg class="a" style="left:3px;top:254px" width="16" height="16" viewBox="0 0 16 16"><defs><linearGradient id="fb" x1="0" y1="0" x2="1" y2="0"><stop offset="0" stop-color="#5ad8ff"/><stop offset="1" stop-color="#1a30c8"/></linearGradient><linearGradient id="fi" x1="0" y1="0" x2="0" y2="1"><stop offset="0" stop-color="#ffffff"/><stop offset="1" stop-color="#d6f8ff"/></linearGradient></defs><rect x="0.5" y="0.5" width="15" height="15" fill="url(#fi)" stroke="#3a72e6"/><rect x="1" y="1" width="14" height="1.8" fill="url(#fb)"/><path d="M11.5 4.6c-.8-.4-1.6-.2-2 .6L6.9 12.2c-.4.8-1.2 1.2-2.5 1.1M6.3 7.6h4.5" fill="none" stroke="#10183a" stroke-width="1.25"/></svg>
<div class="a t" style="left:25.3px;top:255.92px;font:14.8px/1 'Liberation Sans', sans-serif;color:#555;transform:scaleX(0.9785);">sub_5F8F645B</div>
<div class="a" style="left:0px;top:273px;width:226.5px;height:21px;background:#c8f0c8;"></div>
<svg class="a" style="left:3px;top:275px" width="16" height="16" viewBox="0 0 16 16"><defs><linearGradient id="fb" x1="0" y1="0" x2="1" y2="0"><stop offset="0" stop-color="#5ad8ff"/><stop offset="1" stop-color="#1a30c8"/></linearGradient><linearGradient id="fi" x1="0" y1="0" x2="0" y2="1"><stop offset="0" stop-color="#ffffff"/><stop offset="1" stop-color="#d6f8ff"/></linearGradient></defs><rect x="0.5" y="0.5" width="15" height="15" fill="url(#fi)" stroke="#3a72e6"/><rect x="1" y="1" width="14" height="1.8" fill="url(#fb)"/><path d="M11.5 4.6c-.8-.4-1.6-.2-2 .6L6.9 12.2c-.4.8-1.2 1.2-2.5 1.1M6.3 7.6h4.5" fill="none" stroke="#10183a" stroke-width="1.25"/></svg>
<div class="a t" style="left:25.3px;top:276.92px;font:14.8px/1 'Liberation Sans', sans-serif;color:#111;transform:scaleX(1.04);">StructuredQuery1::NamedEntities</div>
<svg class="a" style="left:3px;top:296px" width="16" height="16" viewBox="0 0 16 16"><defs><linearGradient id="fb" x1="0" y1="0" x2="1" y2="0"><stop offset="0" stop-color="#5ad8ff"/><stop offset="1" stop-color="#1a30c8"/></linearGradient><linearGradient id="fi" x1="0" y1="0" x2="0" y2="1"><stop offset="0" stop-color="#ffffff"/><stop offset="1" stop-color="#d6f8ff"/></linearGradient></defs><rect x="0.5" y="0.5" width="15" height="15" fill="url(#fi)" stroke="#3a72e6"/><rect x="1" y="1" width="14" height="1.8" fill="url(#fb)"/><path d="M11.5 4.6c-.8-.4-1.6-.2-2 .6L6.9 12.2c-.4.8-1.2 1.2-2.5 1.1M6.3 7.6h4.5" fill="none" stroke="#10183a" stroke-width="1.25"/></svg>
<div class="a t" style="left:25.3px;top:297.92px;font:14.8px/1 'Liberation Sans', sans-serif;color:#555;transform:scaleX(0.9707);">sub_5F8F64AF</div>
<svg class="a" style="left:3px;top:317px" width="16" height="16" viewBox="0 0 16 16"><defs><linearGradient id="fb" x1="0" y1="0" x2="1" y2="0"><stop offset="0" stop-color="#5ad8ff"/><stop offset="1" stop-color="#1a30c8"/></linearGradient><linearGradient id="fi" x1="0" y1="0" x2="0" y2="1"><stop offset="0" stop-color="#ffffff"/><stop offset="1" stop-color="#d6f8ff"/></linearGradient></defs><rect x="0.5" y="0.5" width="15" height="15" fill="url(#fi)" stroke="#3a72e6"/><rect x="1" y="1" width="14" height="1.8" fill="url(#fb)"/><path d="M11.5 4.6c-.8-.4-1.6-.2-2 .6L6.9 12.2c-.4.8-1.2 1.2-2.5 1.1M6.3 7.6h4.5" fill="none" stroke="#10183a" stroke-width="1.25"/></svg>
<div class="a t" style="left:25.3px;top:318.92px;font:14.8px/1 'Liberation Sans', sans-serif;color:#555;transform:scaleX(0.9946);">sub_5F8F6678</div>
<svg class="a" style="left:3px;top:338px" width="16" height="16" viewBox="0 0 16 16"><defs><linearGradient id="fb" x1="0" y1="0" x2="1" y2="0"><stop offset="0" stop-color="#5ad8ff"/><stop offset="1" stop-color="#1a30c8"/></linearGradient><linearGradient id="fi" x1="0" y1="0" x2="0" y2="1"><stop offset="0" stop-color="#ffffff"/><stop offset="1" stop-color="#d6f8ff"/></linearGradient></defs><rect x="0.5" y="0.5" width="15" height="15" fill="url(#fi)" stroke="#3a72e6"/><rect x="1" y="1" width="14" height="1.8" fill="url(#fb)"/><path d="M11.5 4.6c-.8-.4-1.6-.2-2 .6L6.9 12.2c-.4.8-1.2 1.2-2.5 1.1M6.3 7.6h4.5" fill="none" stroke="#10183a" stroke-width="1.25"/></svg>
<div class="a t" style="left:25.3px;top:339.92px;font:14.8px/1 'Liberation Sans', sans-serif;color:#555;transform:scaleX(0.9946);">sub_5F8F6687</div>
</div>
<div class="a" style="left:229px;top:153px;width:9px;height:385px;background:#fff;"></div>
<div class="a" style="left:230.5px;top:167px;width:4px;height:28px;background:#8a8a8a;border-radius:2px;"></div>
<div class="a" style="left:231px;top:158px;width:2px;height:2px;background:#555;"></div>
<div class="a" style="left:1px;top:528.5px;width:228px;height:9.5px;background:#fff;"></div>
<div class="a" style="left:229px;top:528.5px;width:8.5px;height:9.5px;background:#f4f5f7;"></div>
<div class="a" style="left:5px;top:532.5px;width:1.2px;height:1.2px;background:#555;"></div>
<div class="a" style="left:221.5px;top:532.5px;width:1.8px;height:1.8px;background:#333;"></div>
<div class="a" style="left:231.5px;top:523px;width:1.8px;height:1.8px;background:#333;"></div>
<div class="a" style="left:14px;top:531px;width:28px;height:4px;background:#8a8a8a;border-radius:2px;"></div>
<div class="a t" style="left:6.4px;top:544.42px;font:14.8px/1 'Liberation Sans', sans-serif;color:#3c4043;transform:scaleX(1.0051);">Line 6 of 797</div>
<div class="a" style="left:242px;top:157px;width:938px;height:1px;background:#c4c7cb;"></div>
<div class="a" style="left:242.3px;top:125.2px;width:323.5px;height:33px;background:#fcfcfc;border:1px solid #c9ccd0;border-bottom:none;border-radius:4px 4px 0 0;box-sizing:border-box;"></div>
<div class="a t" style="left:249.8px;top:135.42px;font:14.8px/1 'Liberation Sans', sans-serif;color:#3c4043;transform:scaleX(1.0077);">IDA View-A, Pseudocode-A, Execute script</div>
<svg class="a" style="left:541px;top:135px" width="14" height="14" viewBox="0 0 14 14"><rect x="0.5" y="0.5" width="13" height="13" rx="2" fill="#e66a3a" stroke="#dc3a22"/><path d="M4 4l6 6M10 4l-6 6" stroke="#fff" stroke-width="2"/></svg>
<svg class="a" style="left:573px;top:134.3px" width="15" height="15" viewBox="0 0 15 15"><rect x="0.5" y="0.5" width="14" height="14" fill="#f4f8ff" stroke="#2e64d8"/><rect x="1" y="1" width="13" height="2" fill="#4a80e8"/><path d="M7.5 4.5l3.5 2v4l-3.5 2-3.5-2v-4z" fill="none" stroke="#2a40e0" stroke-width="1.2"/></svg>
<div class="a t" style="left:597px;top:136.42px;font:14.8px/1 'Liberation Sans', sans-serif;color:#3c4043;transform:scaleX(0.9949);">Hex View-1</div>
<svg class="a" style="left:683.4px;top:136px" width="14" height="14" viewBox="0 0 14 14"><rect x="0.5" y="0.5" width="13" height="13" rx="2" fill="#c9cacc" stroke="#a8a8a8"/><path d="M4 4l6 6M10 4l-6 6" stroke="#fff" stroke-width="2"/></svg>
<svg class="a" style="left:715px;top:134.3px" width="15" height="15" viewBox="0 0 15 15"><rect x="0.5" y="0.5" width="14" height="14" fill="#f4f8ff" stroke="#2e64d8"/><rect x="1" y="1" width="13" height="2" fill="#4a80e8"/><path d="M4 13.5L7.5 4.5 11 13.5M5.3 10.5h4.4" fill="none" stroke="#1e3a80" stroke-width="1.6"/><circle cx="7.5" cy="5" r="1.3" fill="#1e3a80"/></svg>
<div class="a t" style="left:738.7px;top:136.42px;font:14.8px/1 'Liberation Sans', sans-serif;color:#3c4043;transform:scaleX(1.0366);">Structures</div>
<svg class="a" style="left:819px;top:136px" width="14" height="14" viewBox="0 0 14 14"><rect x="0.5" y="0.5" width="13" height="13" rx="2" fill="#c9cacc" stroke="#a8a8a8"/><path d="M4 4l6 6M10 4l-6 6" stroke="#fff" stroke-width="2"/></svg>
<svg class="a" style="left:851px;top:134.3px" width="15" height="15" viewBox="0 0 15 15"><rect x="0.5" y="0.5" width="14" height="14" fill="#f4f8ff" stroke="#2e64d8"/><rect x="1" y="1" width="13" height="2" fill="#4a80e8"/><path d="M4.5 4.5l1.3 1.3-1.3 1.3-1.3-1.3zM4.5 8l1.3 1.3-1.3 1.3-1.3-1.3zM4.5 11.5l1.3 1.3-1.3 1.3-1.3-1.3z" fill="#1e50c0"/><path d="M4.5 5.8v7M7.5 5.8h5M7.5 9.3h5M7.5 12.8h5" stroke="#1e3a80"/></svg>
<div class="a t" style="left:874.8px;top:136.42px;font:14.8px/1 'Liberation Sans', sans-serif;color:#3c4043;transform:scaleX(0.9728);">Enums</div>
<svg class="a" style="left:930px;top:136px" width="14" height="14" viewBox="0 0 14 14"><rect x="0.5" y="0.5" width="13" height="13" rx="2" fill="#c9cacc" stroke="#a8a8a8"/><path d="M4 4l6 6M10 4l-6 6" stroke="#fff" stroke-width="2"/></svg>
<svg class="a" style="left:961.7px;top:134.3px" width="15" height="15" viewBox="0 0 15 15"><rect x="0.5" y="0.5" width="14" height="14" fill="#f4f8ff" stroke="#2e64d8"/><rect x="1" y="1" width="13" height="2" fill="#4a80e8"/><path d="M6 6h7M6 8h7M6 10h7M6 12h7" stroke="#1e3a80"/><path d="M1 6h3v-2l3 3-3 3v-2h-3z" fill="#20b020" stroke="#0a600a" stroke-width="0.6"/></svg>
<div class="a t" style="left:985.8px;top:136.42px;font:14.8px/1 'Liberation Sans', sans-serif;color:#3c4043;transform:scaleX(1.0703);">Imports</div>
<svg class="a" style="left:1049.3px;top:136px" width="14" height="14" viewBox="0 0 14 14"><rect x="0.5" y="0.5" width="13" height="13" rx="2" fill="#c9cacc" stroke="#a8a8a8"/><path d="M4 4l6 6M10 4l-6 6" stroke="#fff" stroke-width="2"/></svg>
<svg class="a" style="left:1081px;top:134.3px" width="15" height="15" viewBox="0 0 15 15"><rect x="0.5" y="0.5" width="14" height="14" fill="#f4f8ff" stroke="#2e64d8"/><rect x="1" y="1" width="13" height="2" fill="#4a80e8"/><path d="M2.5 6h5M2.5 8h5M2.5 10h5M2.5 12h5" stroke="#1e3a80"/><path d="M7 8h3v-2.5l3.5 3.5-3.5 3.5v-2.5h-3z" fill="#20b020" stroke="#0a600a" stroke-width="0.6"/></svg>
<div class="a t" style="left:1105.4px;top:136.42px;font:14.8px/1 'Liberation Sans', sans-serif;color:#3c4043;transform:scaleX(1.0286);">Exports</div>
<svg class="a" style="left:1167px;top:136px" width="14" height="14" viewBox="0 0 14 14"><rect x="0.5" y="0.5" width="13" height="13" rx="2" fill="#c9cacc" stroke="#a8a8a8"/><path d="M4 4l6 6M10 4l-6 6" stroke="#fff" stroke-width="2"/></svg>
<div class="a" style="left:242px;top:158px;width:384px;height:33px;background:#f4f5f7;"></div>
<div class="a" style="left:242px;top:190px;width:384px;height:1px;background:#c4c7cb;"></div>
<div class="a" style="left:242.3px;top:158.3px;width:140px;height:33px;background:#fcfcfc;border:1px solid #c9ccd0;border-bottom:none;border-radius:4px 4px 0 0;box-sizing:border-box;"></div>
<svg class="a" style="left:249px;top:165.5px" width="16" height="16" viewBox="0 0 16 16"><rect x="0.5" y="0.5" width="12" height="13" fill="#d8ecff" stroke="#2a6ad8"/><rect x="1" y="1" width="11" height="2.5" fill="#3a80e8"/><rect x="6.5" y="3.5" width="9" height="12" fill="#fafcff" stroke="#1e3f88"/><path d="M8.5 6.5h5M10 8.5h3.5M8.5 10.5h5M10 12.5h3.5" stroke="#2a4a90" stroke-width="1"/></svg>
<div class="a t" style="left:272.9px;top:167.72px;font:14.8px/1 'Liberation Sans', sans-serif;color:#3c4043;transform:scaleX(0.9950);">IDA View-A</div>
<svg class="a" style="left:358.5px;top:168.5px" width="14" height="14" viewBox="0 0 14 14"><rect x="0.5" y="0.5" width="13" height="13" rx="2" fill="#e66a3a" stroke="#dc3a22"/><path d="M4 4l6 6M10 4l-6 6" stroke="#fff" stroke-width="2"/></svg>
<svg class="a" style="left:390px;top:165.5px" width="16" height="16" viewBox="0 0 16 16"><rect x="0.5" y="0.5" width="12" height="13" fill="#d8ecff" stroke="#2a6ad8"/><rect x="1" y="1" width="11" height="2.5" fill="#3a80e8"/><rect x="6.5" y="3.5" width="9" height="12" fill="#fafcff" stroke="#1e3f88"/><path d="M8.5 6.5h5M10 8.5h3.5M8.5 10.5h5M10 12.5h3.5" stroke="#2a4a90" stroke-width="1"/></svg>
<div class="a t" style="left:413.8px;top:168.62px;font:14.8px/1 'Liberation Sans', sans-serif;color:#3c4043;">Pseudocode-A</div>
<svg class="a" style="left:521px;top:168.5px" width="14" height="14" viewBox="0 0 14 14"><rect x="0.5" y="0.5" width="13" height="13" rx="2" fill="#c9cacc" stroke="#a8a8a8"/><path d="M4 4l6 6M10 4l-6 6" stroke="#fff" stroke-width="2"/></svg>
<div class="a" style="left:238px;top:191px;width:4px;height:372px;background:#f9fafb;"></div>
<div class="a" style="left:242px;top:191px;width:75px;height:371px;background:#fff;"></div>
<div class="a" style="left:317px;top:191px;width:4px;height:371px;background:#f9fafb;"></div>
<div class="a" style="left:321px;top:191px;width:303px;height:371px;background:#fff;border-left:1px solid #b8bcc2;border-top:1px solid #b8bcc2;box-sizing:border-box;"></div>
<div class="a" style="left:322px;top:192px;width:293px;height:337px;overflow:hidden">
<div class="a" style="left:0px;top:196px;width:293px;height:13.5px;background:#e2e2e2;"></div>
<div class="a t" style="left:31.0px;top:15.12px;font:bold 13px/1 'Liberation Mono', monospace;color:#000080;">= dword ptr</div>
<div class="a t" style="left:132.39999999999998px;top:15.12px;font:bold 13px/1 'Liberation Mono', monospace;color:#008000;">8</div>
<div class="a t" style="left:31.0px;top:43.12px;font:bold 13px/1 'Liberation Mono', monospace;color:#000080;">mov</div>
<div class="a t" style="left:93.4px;top:43.12px;font:bold 13px/1 'Liberation Mono', monospace;color:#000080;">edi, edi</div>
<div class="a t" style="left:31.0px;top:57.12px;font:bold 13px/1 'Liberation Mono', monospace;color:#000080;">push</div>
<div class="a t" style="left:93.4px;top:57.12px;font:bold 13px/1 'Liberation Mono', monospace;color:#000080;">ebp</div>
<div class="a t" style="left:31.0px;top:71.12px;font:bold 13px/1 'Liberation Mono', monospace;color:#000080;">mov</div>
<div class="a t" style="left:93.4px;top:71.12px;font:bold 13px/1 'Liberation Mono', monospace;color:#000080;">ebp, esp</div>
<div class="a t" style="left:31.0px;top:85.12px;font:bold 13px/1 'Liberation Mono', monospace;color:#000080;">push</div>
<div class="a t" style="left:93.4px;top:85.12px;font:bold 13px/1 'Liberation Mono', monospace;color:#000080;">ebx</div>
<div class="a t" style="left:31.0px;top:99.12px;font:bold 13px/1 'Liberation Mono', monospace;color:#000080;">xor</div>
<div class="a t" style="left:93.4px;top:99.12px;font:bold 13px/1 'Liberation Mono', monospace;color:#000080;">ebx, ebx</div>
<div class="a t" style="left:31.0px;top:113.12px;font:bold 13px/1 'Liberation Mono', monospace;color:#000080;">push</div>
<div class="a t" style="left:93.4px;top:113.12px;font:bold 13px/1 'Liberation Mono', monospace;color:#000080;">esi</div>
<div class="a t" style="left:31.0px;top:127.12px;font:bold 13px/1 'Liberation Mono', monospace;color:#000080;">inc</div>
<div class="a t" style="left:93.4px;top:127.12px;font:bold 13px/1 'Liberation Mono', monospace;color:#000080;">ebx</div>
<div class="a t" style="left:31.0px;top:141.12px;font:bold 13px/1 'Liberation Mono', monospace;color:#000080;">cmp</div>
<div class="a t" style="left:93.4px;top:141.12px;font:bold 13px/1 'Liberation Mono', monospace;color:#000080;">dword_5F91302C, </div>
<div class="a t" style="left:218.2px;top:141.12px;font:bold 13px/1 'Liberation Mono', monospace;color:#008000;">0</div>
<div class="a t" style="left:31.0px;top:155.12px;font:bold 13px/1 'Liberation Mono', monospace;color:#000080;">push</div>
<div class="a t" style="left:93.4px;top:155.12px;font:bold 13px/1 'Liberation Mono', monospace;color:#000080;">edi</div>
<div class="a t" style="left:31.0px;top:169.12px;font:bold 13px/1 'Liberation Mono', monospace;color:#000080;">jnz</div>
<div class="a t" style="left:93.4px;top:169.12px;font:bold 13px/1 'Liberation Mono', monospace;color:#000080;">short loc_5F90F25D</div>
<div class="a t" style="left:31.0px;top:183.12px;font:bold 13px/1 'Liberation Mono', monospace;color:#000080;">mov</div>
<div class="a t" style="left:93.4px;top:183.12px;font:bold 13px/1 'Liberation Mono', monospace;color:#000080;">esi, ds:</div>
<div class="a t" style="left:155.8px;top:183.12px;font:bold 13px/1 'Liberation Mono', monospace;color:#ff00ff;">GetVersionExA</div>
<div class="a t" style="left:31.0px;top:197.12px;font:bold 13px/1 'Liberation Mono', monospace;color:#000080;">mov</div>
<div class="a t" style="left:93.4px;top:197.12px;font:bold 13px/1 'Liberation Mono', monospace;color:#000080;">edi, offset VersionInformation</div>
<div class="a t" style="left:31.0px;top:211.12px;font:bold 13px/1 'Liberation Mono', monospace;color:#000080;">push</div>
<div class="a t" style="left:93.4px;top:211.12px;font:bold 13px/1 'Liberation Mono', monospace;color:#000080;">edi</div>
<div class="a t" style="left:218.2px;top:211.12px;font:bold 13px/1 'Liberation Mono', monospace;color:#0000ff;">; lpVersionInformation</div>
<div class="a t" style="left:31.0px;top:225.12px;font:bold 13px/1 'Liberation Mono', monospace;color:#000080;">mov</div>
<div class="a t" style="left:93.4px;top:225.12px;font:bold 13px/1 'Liberation Mono', monospace;color:#000080;">dword_5F91302C, ebx</div>
<div class="a t" style="left:31.0px;top:239.12px;font:bold 13px/1 'Liberation Mono', monospace;color:#000080;">mov</div>
<div class="a t" style="left:93.4px;top:239.12px;font:bold 13px/1 'Liberation Mono', monospace;color:#000080;">VersionInformation.dwOSVersionInfoSize, 9Ch</div>
<div class="a t" style="left:31.0px;top:253.12px;font:bold 13px/1 'Liberation Mono', monospace;color:#000080;">call</div>
<div class="a t" style="left:93.4px;top:253.12px;font:bold 13px/1 'Liberation Mono', monospace;color:#000080;">esi</div>
<div class="a t" style="left:124.6px;top:253.12px;font:bold 13px/1 'Liberation Mono', monospace;color:#808080;">;</div>
<div class="a t" style="left:140.2px;top:253.12px;font:bold 13px/1 'Liberation Mono', monospace;color:#ff00ff;">GetVersionExA</div>
<div class="a t" style="left:31.0px;top:267.12px;font:bold 13px/1 'Liberation Mono', monospace;color:#000080;">test</div>
<div class="a t" style="left:93.4px;top:267.12px;font:bold 13px/1 'Liberation Mono', monospace;color:#000080;">eax, eax</div>
<div class="a t" style="left:31.0px;top:281.12px;font:bold 13px/1 'Liberation Mono', monospace;color:#000080;">jnz</div>
<div class="a t" style="left:93.4px;top:281.12px;font:bold 13px/1 'Liberation Mono', monospace;color:#000080;">short loc_5F90F25D</div>
<div class="a t" style="left:31.0px;top:295.12px;font:bold 13px/1 'Liberation Mono', monospace;color:#000080;">push</div>
<div class="a t" style="left:93.4px;top:295.12px;font:bold 13px/1 'Liberation Mono', monospace;color:#000080;">edi</div>
<div class="a t" style="left:218.2px;top:295.12px;font:bold 13px/1 'Liberation Mono', monospace;color:#0000ff;">; lpVersionInformation</div>
<div class="a t" style="left:31.0px;top:309.12px;font:bold 13px/1 'Liberation Mono', monospace;color:#000080;">mov</div>
<div class="a t" style="left:93.4px;top:309.12px;font:bold 13px/1 'Liberation Mono', monospace;color:#000080;">VersionInformation.dwOSVersionInfoSize, 94h</div>
<div class="a t" style="left:31.0px;top:323.12px;font:bold 13px/1 'Liberation Mono', monospace;color:#000080;">call</div>
<div class="a t" style="left:93.4px;top:323.12px;font:bold 13px/1 'Liberation Mono', monospace;color:#000080;">esi</div>
<div class="a t" style="left:124.6px;top:323.12px;font:bold 13px/1 'Liberation Mono', monospace;color:#808080;">;</div>
<div class="a t" style="left:140.2px;top:323.12px;font:bold 13px/1 'Liberation Mono', monospace;color:#ff00ff;">GetVersionExA</div>
<div class="a" style="left:115px;top:197px;width:1.6px;height:12.5px;background:#000;"></div>
</div>
<svg class="a" style="left:242px;top:191px" width="75" height="371" viewBox="0 0 75 371"><circle cx="68" cy="46" r="3" fill="#5cc8f5"/><circle cx="68" cy="60" r="3" fill="#5cc8f5"/><circle cx="68" cy="74" r="3" fill="#5cc8f5"/><circle cx="68" cy="88" r="3" fill="#5cc8f5"/><circle cx="68" cy="102" r="3" fill="#5cc8f5"/><circle cx="68" cy="116" r="3" fill="#5cc8f5"/><circle cx="68" cy="130" r="3" fill="#5cc8f5"/><circle cx="68" cy="144" r="3" fill="#5cc8f5"/><circle cx="68" cy="158" r="3" fill="#5cc8f5"/><circle cx="68" cy="172" r="3" fill="#5cc8f5"/><circle cx="68" cy="186" r="3" fill="#5cc8f5"/><circle cx="68" cy="200" r="3" fill="#5cc8f5"/><circle cx="68" cy="214" r="3" fill="#5cc8f5"/><circle cx="68" cy="228" r="3" fill="#5cc8f5"/><circle cx="68" cy="242" r="3" fill="#5cc8f5"/><circle cx="68" cy="256" r="3" fill="#5cc8f5"/><circle cx="68" cy="270" r="3" fill="#5cc8f5"/><circle cx="68" cy="284" r="3" fill="#5cc8f5"/><circle cx="68" cy="298" r="3" fill="#5cc8f5"/><circle cx="68" cy="312" r="3" fill="#5cc8f5"/><circle cx="68" cy="326" r="3" fill="#5cc8f5"/><path d="M55.5 178v185" stroke="#a8a8a8" stroke-dasharray="5 4" fill="none"/><path d="M55.5 178.5h14M55.5 289.5h14" stroke="#a8a8a8" stroke-dasharray="5 4" fill="none"/><path d="M50.5 362l5 5 5-5z" fill="#a0a0a0"/></svg>
<div class="a" style="left:615.5px;top:192px;width:9px;height:370px;background:#f8f8f8;"></div>
<div class="a" style="left:617px;top:469px;width:4px;height:27px;background:#8a8a8a;border-radius:2px;"></div>
<div class="a" style="left:618px;top:197px;width:2px;height:2px;background:#555;"></div>
<div class="a" style="left:322.6px;top:530px;width:73.39999999999998px;height:18px;overflow:hidden;box-sizing:border-box;border:1px solid #c8cacd;background:#f8f8f8">
<div class="a t" style="left:1.5px;top:2.36px;font:14px/1 'Liberation Mono', monospace;color:#707070;letter-spacing:0.5px;">0001E634</div>
</div>
<div class="a" style="left:399.8px;top:530px;width:104.19999999999999px;height:18px;overflow:hidden;box-sizing:border-box;border:1px solid #c8cacd;background:#f8f8f8">
<div class="a t" style="left:1.5px;top:2.36px;font:14px/1 'Liberation Mono', monospace;color:#707070;letter-spacing:0.5px;">5F90F234: st</div>
</div>
<div class="a" style="left:508px;top:530px;width:107px;height:18px;overflow:hidden;box-sizing:border-box;border:1px solid #c8cacd;border-right:none;background:#f8f8f8">
<div class="a t" style="left:1.5px;top:2.36px;font:14px/1 'Liberation Mono', monospace;color:#707070;letter-spacing:0.5px;">(Synchronized</div>
</div>
<div class="a" style="left:322px;top:549px;width:293px;height:12px;background:#fff;"></div>
<div class="a" style="left:615.5px;top:550px;width:9px;height:11px;background:#f0f1f3;"></div>
<div class="a" style="left:325px;top:555px;width:1.2px;height:1.2px;background:#555;"></div>
<div class="a" style="left:609.5px;top:554.5px;width:1.8px;height:1.8px;background:#333;"></div>
<div class="a" style="left:619px;top:544px;width:1.8px;height:1.8px;background:#333;"></div>
<div class="a" style="left:416px;top:552.5px;width:103px;height:6.5px;background:#8a8a8a;border-radius:3px;"></div>
<div class="a" style="left:626px;top:158px;width:4px;height:407px;background:#f9fafb;"></div>
<div class="a" style="left:630.3px;top:158.4px;width:560px;height:25.5px;background:#f4f5f7;border-left:1px solid #d2d4d7;border-top:1px solid #d2d4d7;border-bottom:1px solid #d2d4d7;box-sizing:border-box;"></div>
<svg class="a" style="left:632px;top:161px" width="18" height="19" viewBox="0 0 18 19"><path d="M4.5 10h4l1.5 3 4 4h-11.5l2-4z" fill="#dcc0a8"/><path d="M1.5 6c0-3.5 2.5-5 6-5 3 0 4.5 1.5 5.5 3 2.5 0 4 1.5 4 4s-1.5 4-3 4l1 3.5c-1 .5-2 0-3-1.5-1-3-1.5-6-3-8-1.5 1-3.5 1-5 .5l-1.5 3z" fill="#1c1410"/><ellipse cx="6.2" cy="8.2" rx="3.4" ry="4.6" fill="#e6cbb4"/><path d="M3.2 10.5l1.3.5" stroke="#b05040" stroke-width="1.2"/><path d="M3 4.5c1-2 4-2.5 6.5-1" stroke="#1c1410" stroke-width="1.6" fill="none"/></svg>
<div class="a t" style="left:655.5px;top:164.72px;font:14.8px/1 'Liberation Sans', sans-serif;color:#3c4043;transform:scaleX(1.0115);">Execute script</div>
<svg class="a" style="left:1125px;top:168px" width="10" height="10" viewBox="0 0 10 10"><rect x="0.5" y="0.5" width="8" height="8" fill="none" stroke="#000" stroke-width="1"/><rect x="0" y="0" width="9" height="2" fill="#000"/></svg>
<svg class="a" style="left:1150px;top:167.5px" width="11" height="11" viewBox="0 0 11 11"><rect x="0.6" y="0.6" width="9.8" height="9.8" rx="2" fill="none" stroke="#6a6a6a" stroke-width="1.2"/><rect x="3.5" y="2.5" width="5" height="5" fill="none" stroke="#6a6a6a"/><rect x="2.5" y="4.5" width="4" height="4" fill="#fff" stroke="#6a6a6a"/></svg>
<svg class="a" style="left:1176px;top:167.5px" width="11" height="11" viewBox="0 0 11 11"><rect x="0.6" y="0.6" width="9.8" height="9.8" rx="2" fill="none" stroke="#6a6a6a" stroke-width="1.2"/><path d="M3 3l5 5M8 3l-5 5" stroke="#555" stroke-width="2"/></svg>
<div class="a t" style="left:639.3px;top:197.42px;font:14.8px/1 'Liberation Sans', sans-serif;color:#3c4043;transform:scaleX(1.0500);">S<u>n</u>ippet list</div>
<div class="a t" style="left:847.4px;top:197.42px;font:14.8px/1 'Liberation Sans', sans-serif;color:#3c4043;transform:scaleX(1.0306);">Please enter script <u>b</u>ody</div>
<div class="a" style="left:639.3px;top:218.2px;width:208px;height:228px;background:#fff;border:1px solid #c2c5c9;border-right:none;box-sizing:border-box;"></div>
<div class="a t" style="left:644px;top:225.42px;font:14.8px/1 'Liberation Sans', sans-serif;color:#3c4043;">Name</div>
<div class="a" style="left:640.3px;top:243.7px;width:201.7px;height:21px;background:#e95420;"></div>
<svg class="a" style="left:643px;top:246px" width="16" height="16" viewBox="0 0 16 16"><rect x="0" y="0" width="16" height="16" fill="#f2c4b0"/><path d="M7.9 0.5C5 0.5 4.2 1.6 4.2 3.3V5.1H8V5.7H2.7C1.1 5.7 0.5 6.9 0.5 8.6 0.5 10.3 1.3 11.5 2.7 11.5H4V9.7C4 8.4 5.1 7.3 6.4 7.3H9.7C10.9 7.3 11.8 6.4 11.8 5.1V3.3C11.8 1.8 10.6 0.5 7.9 0.5Z" fill="#6a6c88"/><path d="M8.1 15.5C11 15.5 11.8 14.4 11.8 12.7V10.9H8V10.3H13.3C14.9 10.3 15.5 9.1 15.5 7.4 15.5 5.7 14.7 4.5 13.3 4.5H12V6.3C12 7.6 10.9 8.7 9.6 8.7H6.3C5.1 8.7 4.2 9.6 4.2 10.9V12.7C4.2 14.2 5.4 15.5 8.1 15.5Z" fill="#f2ae38"/><circle cx="6" cy="2.4" r="0.75" fill="#fff"/><circle cx="10" cy="13.6" r="0.75" fill="#fff"/></svg>
<div class="a t" style="left:665.4px;top:248.02px;font:14.8px/1 'Liberation Sans', sans-serif;color:#fff;transform:scaleX(1.0915);">xrefs</div>
<svg class="a" style="left:643px;top:267px" width="16" height="16" viewBox="0 0 16 16"><path d="M7.9 0.5C5 0.5 4.2 1.6 4.2 3.3V5.1H8V5.7H2.7C1.1 5.7 0.5 6.9 0.5 8.6 0.5 10.3 1.3 11.5 2.7 11.5H4V9.7C4 8.4 5.1 7.3 6.4 7.3H9.7C10.9 7.3 11.8 6.4 11.8 5.1V3.3C11.8 1.8 10.6 0.5 7.9 0.5Z" fill="#3d79b0"/><path d="M8.1 15.5C11 15.5 11.8 14.4 11.8 12.7V10.9H8V10.3H13.3C14.9 10.3 15.5 9.1 15.5 7.4 15.5 5.7 14.7 4.5 13.3 4.5H12V6.3C12 7.6 10.9 8.7 9.6 8.7H6.3C5.1 8.7 4.2 9.6 4.2 10.9V12.7C4.2 14.2 5.4 15.5 8.1 15.5Z" fill="#f8d23a"/><circle cx="6" cy="2.4" r="0.75" fill="#fff"/><circle cx="10" cy="13.6" r="0.75" fill="#fff"/></svg>
<div class="a t" style="left:665.4px;top:269.02px;font:14.8px/1 'Liberation Sans', sans-serif;color:#555;transform:scaleX(1.0637);">Default snippet</div>
<div class="a" style="left:640.3px;top:436px;width:201.7px;height:10px;background:#fff;border-top:1px solid #eceef0;box-sizing:border-box;"></div>
<div class="a" style="left:653px;top:439px;width:150px;height:4.6px;background:#7f7f7f;border-radius:2.3px;"></div>
<div class="a" style="left:644px;top:440px;width:1.5px;height:1.5px;background:#555;"></div>
<div class="a" style="left:836px;top:440px;width:1.5px;height:1.5px;background:#555;"></div>
<div class="a" style="left:842px;top:218px;width:5.5px;height:228px;background:#f9fafb;"></div>
<div class="a" style="left:847.5px;top:218px;width:340px;height:227px;background:#fff;border:1px solid #b8bcc2;border-right:none;border-bottom:none;box-sizing:border-box;"></div>
<div class="a" style="left:848.5px;top:219px;width:18.5px;height:226px;background:#f2f3f5;"></div>
<div class="a" style="left:867px;top:219px;width:1px;height:226px;background:#8a8a8a;"></div>
<div class="a t" style="left:857.8px;top:224.58px;font:bold 12px/1 'Liberation Mono', monospace;color:#808080;">1</div>
<div class="a t" style="left:871.6px;top:223.82px;font:bold 13px/1 'Liberation Mono', monospace;color:#0000ff;">from</div>
<div class="a t" style="left:910.6px;top:223.82px;font:13px/1 'Liberation Mono', monospace;color:#181818;">bip.base</div>
<div class="a t" style="left:980.8000000000001px;top:223.82px;font:bold 13px/1 'Liberation Mono', monospace;color:#0000ff;">import</div>
<div class="a t" style="left:1035.4px;top:223.82px;font:bold 13px/1 'Liberation Mono', monospace;color:#181818;">*</div>
<div class="a t" style="left:857.8px;top:238.58px;font:bold 12px/1 'Liberation Mono', monospace;color:#808080;">2</div>
<div class="a t" style="left:857.8px;top:252.58px;font:bold 12px/1 'Liberation Mono', monospace;color:#808080;">3</div>
<div class="a t" style="left:871.6px;top:251.82px;font:13px/1 'Liberation Mono', monospace;color:#181818;">i = BipInstr()</div>
<div class="a t" style="left:857.8px;top:266.58px;font:bold 12px/1 'Liberation Mono', monospace;color:#808080;">4</div>
<div class="a t" style="left:871.6px;top:265.82px;font:bold 13px/1 'Liberation Mono', monospace;color:#0000ff;">print</div>
<div class="a t" style="left:910.6px;top:265.82px;font:13px/1 'Liberation Mono', monospace;color:#181818;">(</div>
<div class="a t" style="left:918.4px;top:265.82px;font:bold 13px/1 'Liberation Mono', monospace;color:#7f0000;">"To's"</div>
<div class="a t" style="left:965.2px;top:265.82px;font:13px/1 'Liberation Mono', monospace;color:#181818;">)</div>
<div class="a t" style="left:857.8px;top:280.58px;font:bold 12px/1 'Liberation Mono', monospace;color:#808080;">5</div>
<div class="a t" style="left:871.6px;top:279.82px;font:bold 13px/1 'Liberation Mono', monospace;color:#0000ff;">for</div>
<div class="a t" style="left:902.8000000000001px;top:279.82px;font:13px/1 'Liberation Mono', monospace;color:#181818;">to</div>
<div class="a t" style="left:926.2px;top:279.82px;font:bold 13px/1 'Liberation Mono', monospace;color:#0000ff;">in</div>
<div class="a t" style="left:949.6px;top:279.82px;font:13px/1 'Liberation Mono', monospace;color:#181818;">i.xTo:</div>
<div class="a t" style="left:857.8px;top:294.58px;font:bold 12px/1 'Liberation Mono', monospace;color:#808080;">6</div>
<div class="a t" style="left:902.8000000000001px;top:293.82px;font:bold 13px/1 'Liberation Mono', monospace;color:#0000ff;">print</div>
<div class="a t" style="left:941.8000000000001px;top:293.82px;font:13px/1 'Liberation Mono', monospace;color:#181818;">(to.src)</div>
<div class="a t" style="left:857.8px;top:308.58px;font:bold 12px/1 'Liberation Mono', monospace;color:#808080;">7</div>
<div class="a t" style="left:857.8px;top:322.58px;font:bold 12px/1 'Liberation Mono', monospace;color:#808080;">8</div>
<div class="a t" style="left:871.6px;top:321.82px;font:bold 13px/1 'Liberation Mono', monospace;color:#0000ff;">print</div>
<div class="a t" style="left:910.6px;top:321.82px;font:13px/1 'Liberation Mono', monospace;color:#181818;">(</div>
<div class="a t" style="left:918.4px;top:321.82px;font:bold 13px/1 'Liberation Mono', monospace;color:#7f0000;">"Code to's"</div>
<div class="a t" style="left:1004.2px;top:321.82px;font:13px/1 'Liberation Mono', monospace;color:#181818;">)</div>
<div class="a t" style="left:857.8px;top:336.58px;font:bold 12px/1 'Liberation Mono', monospace;color:#808080;">9</div>
<div class="a t" style="left:871.6px;top:335.82px;font:bold 13px/1 'Liberation Mono', monospace;color:#0000ff;">for</div>
<div class="a t" style="left:902.8000000000001px;top:335.82px;font:13px/1 'Liberation Mono', monospace;color:#181818;">to</div>
<div class="a t" style="left:926.2px;top:335.82px;font:bold 13px/1 'Liberation Mono', monospace;color:#0000ff;">in</div>
<div class="a t" style="left:949.6px;top:335.82px;font:13px/1 'Liberation Mono', monospace;color:#181818;">i.xCodeTo:</div>
<div class="a t" style="left:850.6px;top:350.58px;font:bold 12px/1 'Liberation Mono', monospace;color:#808080;">10</div>
<div class="a t" style="left:902.8000000000001px;top:349.82px;font:bold 13px/1 'Liberation Mono', monospace;color:#0000ff;">print</div>
<div class="a t" style="left:941.8000000000001px;top:349.82px;font:13px/1 'Liberation Mono', monospace;color:#181818;">(to)</div>
<div class="a t" style="left:850.6px;top:364.58px;font:bold 12px/1 'Liberation Mono', monospace;color:#808080;">11</div>
<div class="a t" style="left:645.4px;top:451.92px;font:14.8px/1 'Liberation Sans', sans-serif;color:#3c4043;">Line 1 of 2</div>
<div class="a t" style="left:847.4px;top:454.42px;font:14.8px/1 'Liberation Sans', sans-serif;color:#3c4043;transform:scaleX(1.0117);">Line:11</div>
<div class="a t" style="left:908.3px;top:454.42px;font:14.8px/1 'Liberation Sans', sans-serif;color:#3c4043;transform:scaleX(0.9948);">Column:1</div>
<div class="a t" style="left:639px;top:481.82px;font:14.8px/1 'Liberation Sans', sans-serif;color:#3c4043;transform:scaleX(1.0247);"><u>S</u>cripting language</div>
<div class="a" style="left:793px;top:476.5px;width:73.5px;height:24px;background:#fff;box-sizing:border-box;border:1px solid #c4c6c9;border-radius:3px;"></div>
<div class="a t" style="left:798.5px;top:481.82px;font:14.8px/1 'Liberation Sans', sans-serif;color:#3c4043;transform:scaleX(1.0311);">Python</div>
<div class="a" style="left:845.5px;top:481px;width:1px;height:14px;background:#e0e0e0;"></div>
<svg class="a" style="left:849px;top:486px" width="10" height="5" viewBox="0 0 10 5"><path d="M0 0h10l-5 5z" fill="#444"/></svg>
<div class="a t" style="left:884.5px;top:481.82px;font:14.8px/1 'Liberation Sans', sans-serif;color:#3c4043;transform:scaleX(0.9764);"><u>T</u>ab size</div>
<div class="a" style="left:961.4px;top:476.3px;width:67px;height:24.4px;background:#fff;box-sizing:border-box;border:1px solid #c4c6c9;border-radius:3px;"></div>
<div class="a t" style="left:964.6px;top:481.82px;font:14.8px/1 'Liberation Sans', sans-serif;color:#555;transform:scaleX(1.0329);">4</div>
<div class="a" style="left:998.5px;top:499.5px;width:29px;height:1px;background:#888;"></div>
<svg class="a" style="left:1009px;top:488px" width="10" height="5" viewBox="0 0 10 5"><path d="M0 0h10l-5 5z" fill="#444"/></svg>
<div class="a" style="left:920.4px;top:526.5px;width:82.30000000000007px;height:24.2px;background:#fcfcfc;box-sizing:border-box;border:1px solid #c4c6c9;border-radius:3px;"></div>
<div class="a" style="left:1011.4px;top:526.5px;width:82.19999999999993px;height:24.2px;background:#fcfcfc;box-sizing:border-box;border:1px solid #c4c6c9;border-radius:3px;"></div>
<div class="a" style="left:1102.3px;top:526.5px;width:87.70000000000005px;height:24.2px;background:#fcfcfc;box-sizing:border-box;border:1px solid #c4c6c9;border-radius:3px;"></div>
<div class="a t" style="left:948.5px;top:531.92px;font:14.8px/1 'Liberation Sans', sans-serif;color:#3c4043;transform:scaleX(0.9578);"><u>R</u>un</div>
<div class="a t" style="left:1030px;top:531.92px;font:14.8px/1 'Liberation Sans', sans-serif;color:#3c4043;transform:scaleX(1.0640);">Ex<u>p</u>ort</div>
<div class="a t" style="left:1120.5px;top:531.92px;font:14.8px/1 'Liberation Sans', sans-serif;color:#3c4043;transform:scaleX(1.0970);"><u>I</u>mport</div>
<div class="a" style="left:0px;top:562px;width:1180px;height:4px;background:#f9fafb;"></div>
<div class="a" style="left:0px;top:565px;width:1180px;height:26.5px;background:#f4f5f7;border-top:1px solid #d2d4d7;border-bottom:1px solid #d2d4d7;box-sizing:border-box;"></div>
<svg class="a" style="left:4px;top:570px" width="14" height="16" viewBox="0 0 14 16"><rect x="0.5" y="0.5" width="13" height="15" fill="#fafcff" stroke="#30507a"/><rect x="1" y="1" width="12" height="2" fill="#3a7ae0"/><path d="M3 5.5h8M3 7.5h8M3 9.5h8M3 11.5h8M3 13.5h8" stroke="#2a4a80"/></svg>
<div class="a t" style="left:25.4px;top:572.22px;font:14.8px/1 'Liberation Sans', sans-serif;color:#3c4043;transform:scaleX(1.0779);">Output window</div>
<svg class="a" style="left:1125px;top:573px" width="10" height="10" viewBox="0 0 10 10"><rect x="0.5" y="0.5" width="8" height="8" fill="none" stroke="#000" stroke-width="1"/><rect x="0" y="0" width="9" height="2" fill="#000"/></svg>
<svg class="a" style="left:1150px;top:573px" width="11" height="11" viewBox="0 0 11 11"><rect x="0.6" y="0.6" width="9.8" height="9.8" rx="2" fill="none" stroke="#6a6a6a" stroke-width="1.2"/><rect x="3.5" y="2.5" width="5" height="5" fill="none" stroke="#6a6a6a"/><rect x="2.5" y="4.5" width="4" height="4" fill="#fff" stroke="#6a6a6a"/></svg>
<svg class="a" style="left:1176px;top:573px" width="11" height="11" viewBox="0 0 11 11"><rect x="0.6" y="0.6" width="9.8" height="9.8" rx="2" fill="none" stroke="#6a6a6a" stroke-width="1.2"/><path d="M3 3l5 5M8 3l-5 5" stroke="#555" stroke-width="2"/></svg>
<div class="a" style="left:0px;top:593px;width:1180px;height:140px;background:#fff;border-top:1px solid #c2c5c9;border-left:1px solid #c2c5c9;border-bottom:1px solid #c2c5c9;box-sizing:border-box;"></div>
<div class="a t" style="left:7.1px;top:593.88px;font:bold 17px/1 'Liberation Mono', monospace;color:#000;letter-spacing:1.2px;">BipInstr: 0x5F90E3A6 (call    _staticIsOS@4; staticIsOS(x))</div>
<div class="a t" style="left:7.1px;top:613.88px;font:bold 17px/1 'Liberation Mono', monospace;color:#000;letter-spacing:1.2px;">BipInstr: 0x5F90E3B1 (call    _staticIsOS@4; staticIsOS(x))</div>
<div class="a t" style="left:7.1px;top:633.88px;font:bold 17px/1 'Liberation Mono', monospace;color:#000;letter-spacing:1.2px;">BipInstr: 0x5F90EFED (call    _staticIsOS@4; staticIsOS(x))</div>
<div class="a t" style="left:7.1px;top:653.88px;font:bold 17px/1 'Liberation Mono', monospace;color:#000;letter-spacing:1.2px;">BipInstr: 0x5F90F03A (call    _staticIsOS@4; staticIsOS(x))</div>
<div class="a t" style="left:7.1px;top:673.88px;font:bold 17px/1 'Liberation Mono', monospace;color:#000;letter-spacing:1.2px;">BipInstr: 0x5F90F07F (call    _staticIsOS@4; staticIsOS(x))</div>
<div class="a t" style="left:7.1px;top:693.88px;font:bold 17px/1 'Liberation Mono', monospace;color:#000;letter-spacing:1.2px;">Flushing buffers, please wait...ok</div>
<div class="a t" style="left:7.1px;top:713.88px;font:bold 17px/1 'Liberation Mono', monospace;color:#000;letter-spacing:1.2px;">Database has been saved</div>
<div class="a" style="left:2.5px;top:734.3px;width:73.8px;height:25px;background:#fcfcfc;box-sizing:border-box;border:1px solid #c4c6c9;border-radius:3px;"></div>
<div class="a t" style="left:15.8px;top:740.42px;font:14.8px/1 'Liberation Sans', sans-serif;color:#3c4043;transform:scaleX(1.0311);">Python</div>
<div class="a" style="left:82.6px;top:734.3px;width:1110px;height:25px;background:#fff;box-sizing:border-box;border:1px solid #c4c6c9;border-radius:3px;"></div>
<div class="a" style="left:1.3px;top:764.3px;width:100.4px;height:17.6px;overflow:hidden;box-sizing:border-box;border:1px solid #c8cacd;background:#f6f6f6">
<div class="a t" style="left:1.2px;top:1.36px;font:14px/1 'Liberation Mono', monospace;color:#707070;letter-spacing:0.5px;">AU:  idle</div>
</div>
<div class="a" style="left:105px;top:764.3px;width:72.5px;height:17.6px;overflow:hidden;box-sizing:border-box;border:1px solid #c8cacd;background:#f6f6f6">
<div class="a t" style="left:1.2px;top:1.36px;font:14px/1 'Liberation Mono', monospace;color:#707070;letter-spacing:0.5px;">Down</div>
</div>
<div class="a" style="left:181.3px;top:764.3px;width:92.5px;height:17.6px;overflow:hidden;box-sizing:border-box;border:1px solid #c8cacd;background:#f6f6f6">
<div class="a t" style="left:1.2px;top:1.36px;font:14px/1 'Liberation Mono', monospace;color:#707070;letter-spacing:0.5px;">Disk: 27GB</div>
</div>
</body></html>
